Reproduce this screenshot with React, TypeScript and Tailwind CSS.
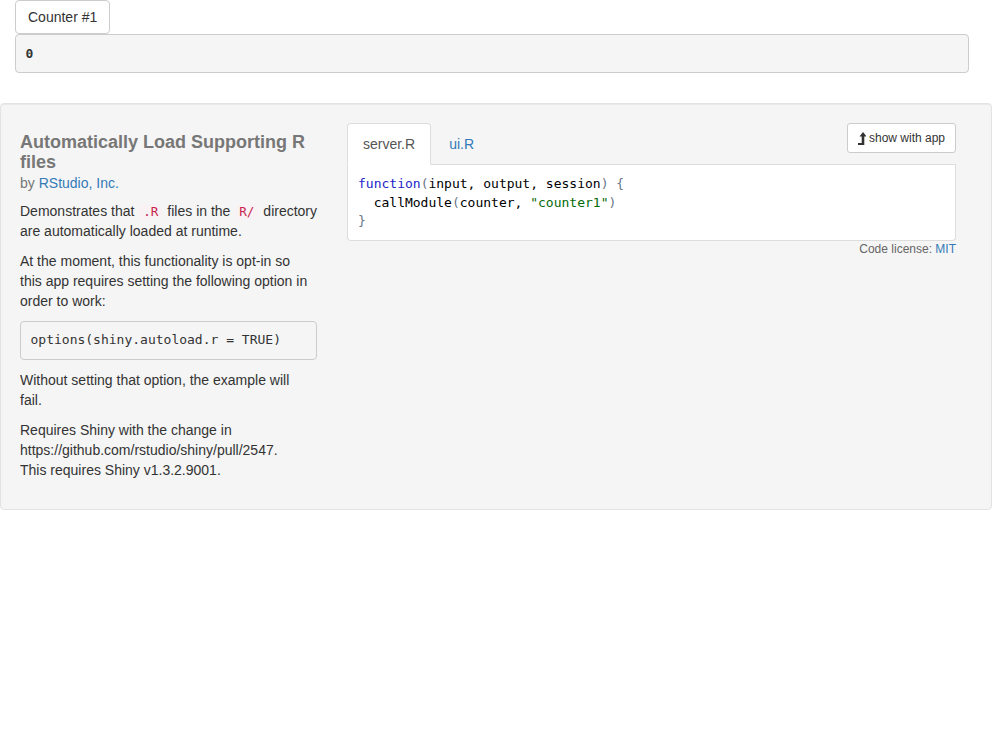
import React from 'react';

const sans = 'font-["Liberation_Sans","Helvetica_Neue",Arial,sans-serif]';
const mono = 'font-["DejaVu_Sans_Mono",Menlo,monospace]';

function LevelUpIcon() {
    return (
        <svg width="8" height="13" viewBox="0 0 8 13" className="inline-block">
            <path d="M5 0 L8.5 4.5 L6.3 4.5 L6.3 13 L0 13 L0 11 L3.7 11 L3.7 4.5 L1.5 4.5 Z" fill="#333" />
        </svg>
    );
}

function InlineCode({ children }: { children: React.ReactNode }) {
    return (
        <code
            className={`${mono} inline-block align-baseline text-[12.6px] leading-[15px] text-[#c7254e] bg-[#f9f2f4] px-[4px] mx-[1px] rounded-[4px]`}
        >
            {children}
        </code>
    );
}

export default function App() {
    return (
        <div className={`${sans} text-[14px] leading-[20px] text-[#333] bg-white min-h-screen`}>
            {/* Counter module */}
            <div className="px-[15px]">
                <button className="h-[34px] px-[12px] border border-[#ccc] rounded-[4px] bg-white text-[14px] text-[#333] block">
                    Counter #1
                </button>
                <pre
                    className={`${mono} w-[954px] h-[39px] mb-[30px] px-[9.5px] py-[9.5px] bg-[#f5f5f5] border border-[#ccc] rounded-[4px] text-[13px] leading-[18.5px] text-[#333] font-semibold`}
                >
                    0
                </pre>
            </div>

            {/* Showcase well */}
            <div className="border border-[#e3e3e3] bg-[#f5f5f5] rounded-[4px] shadow-[inset_0_1px_1px_rgba(0,0,0,0.05)] px-[19px] pt-[19px] pb-[19px] flex">
                {/* Description */}
                <div className="w-[297px] shrink-0">
                    <h4 className="mt-[10px] text-[18px] leading-[1.1] font-bold text-[#777]">
                        Automatically Load Supporting R files
                    </h4>
                    <div className="text-[#777]">
                        by <a className="text-[#337ab7]">RStudio, Inc.</a>
                    </div>
                    <p className="mt-[8px] mb-[10px]">
                        <span className="whitespace-nowrap">
                            Demonstrates that <InlineCode>.R</InlineCode> files in the <InlineCode>R/</InlineCode> directory
                        </span>
                        <br />
                        are automatically loaded at runtime.
                    </p>
                    <p className="mb-[10px]">
                        At the moment, this functionality is opt-in so
                        <br />
                        this app requires setting the following option in
                        <br />
                        order to work:
                    </p>
                    <pre
                        className={`${mono} mb-[10px] px-[9.5px] py-[9.5px] bg-[#f5f5f5] border border-[#ccc] rounded-[4px] text-[13px] leading-[18.5px] text-[#333]`}
                    >
                        options(shiny.autoload.r = TRUE)
                    </pre>
                    <p className="mb-[10px]">
                        Without setting that option, the example will
                        <br />
                        fail.
                    </p>
                    <p className="mb-[10px]">
                        Requires Shiny with the change in
                        <br />
                        https://github.com/rstudio/shiny/pull/2547.
                        <br />
                        This requires Shiny v1.3.2.9001.
                    </p>
                </div>

                {/* Code tabs */}
                <div className="ml-[30px] w-[609px] shrink-0">
                    <div className="flex border-b border-[#ddd]">
                        <div className="-mb-px px-[15px] py-[10px] bg-white border border-[#ddd] border-b-transparent rounded-t-[4px] text-[#555] mr-[2px]">
                            server.R
                        </div>
                        <div className="-mb-px px-[15px] py-[10px] border border-transparent text-[#337ab7]">ui.R</div>
                        <button className="ml-auto self-start h-[30px] px-[10px] bg-white border border-[#ccc] rounded-[3px] text-[12px] leading-[18px] text-[#333] flex items-center gap-[3px]">
                            <LevelUpIcon />
                            show with app
                        </button>
                    </div>
                    <pre
                        className={`${mono} bg-white border border-[#ddd] border-t-0 rounded-b-[4px] px-[10px] pt-[10px] pb-[9px] text-[13px] leading-[18.5px] text-[#000]`}
                    >
                        <span className="text-[#2323c8]">function</span>
                        <span className="text-[#687687]">(</span>input, output, session<span className="text-[#687687]">)</span>{' '}
                        <span className="text-[#687687]">{'{'}</span>
                        {'\n'}
                        {'  '}callModule<span className="text-[#687687]">(</span>counter,{' '}
                        <span className="text-[#036a07]">"counter1"</span>
                        <span className="text-[#687687]">)</span>
                        {'\n'}
                        <span className="text-[#687687]">{'}'}</span>
                    </pre>
                    <div className="text-right text-[12px] leading-[17px] text-[#666]">
                        Code license: <a className="text-[#337ab7]">MIT</a>
                    </div>
                </div>
            </div>
        </div>
    );
}
